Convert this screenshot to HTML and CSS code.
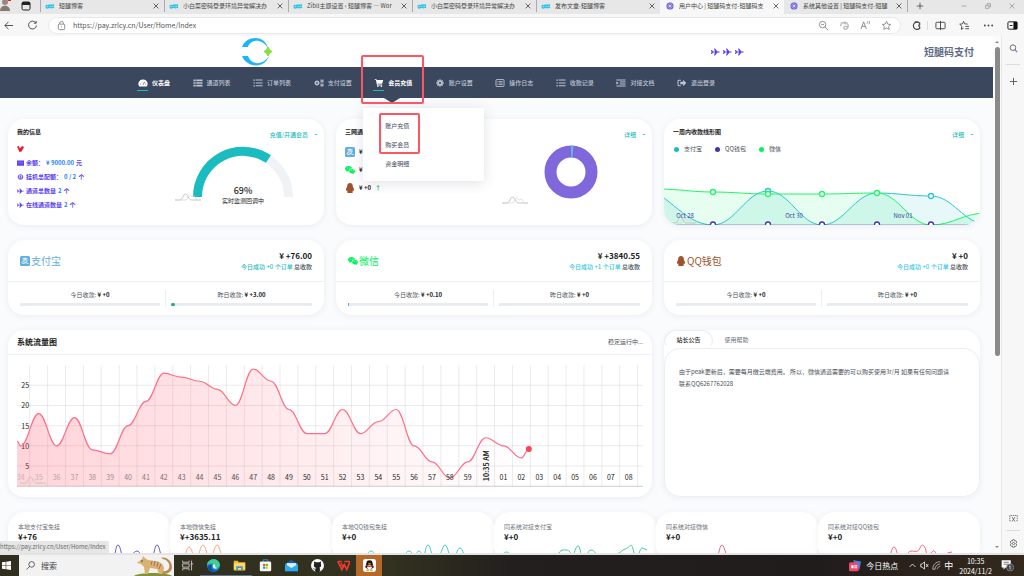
FILE: index.html
```html
<!DOCTYPE html>
<html lang="zh-CN">
<head>
    <meta charset="UTF-8">
    <meta name="viewport" content="width=device-width, initial-scale=1.0">
    <title>用户中心 | 短腿码支付</title>
    <link rel="stylesheet" href="styles.css">
</head>
<body>
    <svg class="sprite" aria-hidden="true">
        <symbol id="i-close" viewBox="0 0 10 10"><path d="M2 2l6 6M8 2l-6 6" fill="none" stroke="currentColor"/></symbol>
        <symbol id="i-blog" viewBox="0 0 20 14"><path d="M1 8c1-4 4-4 6-2l1-3 3 2 2-2 1 3 4-2-1 4 2 2-6 2-4-1-3 1c-3 1-5 0-5-4z" fill="#35c3e6"/><path d="M1 5h8l1-2 2 2 6-2-1 8H3z" fill="#35c3e6"/><path d="M3 8h3M9 7l2 2M13 8h3" stroke="#fff" fill="none"/></symbol>
        <symbol id="i-pay" viewBox="0 0 16 16"><circle cx="8" cy="8" r="7" fill="#5b4bd6"/><circle cx="8" cy="8" r="4.5" fill="none" stroke="#d8d4ff" stroke-width="1.5"/><path d="M6.500 6h3v4h-3z" fill="#fff"/></symbol>
        <symbol id="i-plane" viewBox="0 0 18 16"><path d="M0 4h2l2 3h4L6 1h2l5 6h3c1 0 2 .5 2 1s-1 1-2 1h-3l-5 6H6l2-6H4l-2 3H0l1-4z" fill="currentColor"/></symbol>
        <symbol id="i-alipay" viewBox="0 0 16 16"><rect width="16" height="16" rx="2.500" fill="#63aede"/><path d="M4 4.200h8M8 2.500v4M4.500 6.500h7c-1 4-4 6-7 5.500-2-.6-1.500-3 .5-3 3 0 5 2.500 9 3.500" fill="none" stroke="#fff" stroke-width="1.300"/></symbol>
        <symbol id="i-wechat" viewBox="0 0 20 16"><path d="M7 0c4 0 7 2.500 7 5-4-.5-7 2-6.500 5.500L5 10.300 2.500 12l.6-2.500C1 8.500 0 7 0 5.500 0 2.500 3 0 7 0z" fill="#00f45e"/><path d="M14 6c3.500 0 6 2 6 4.600 0 1.500-1 2.700-2.200 3.500l.4 1.900-2.200-1.200c-4 .8-7.700-1-7.700-4.200C8.300 8 10.800 6 14 6z" fill="#00f45e"/><g fill="#fff"><circle cx="4.700" cy="4" r=".9"/><circle cx="9" cy="4" r=".9"/><circle cx="12.200" cy="9.300" r=".8"/><circle cx="16" cy="9.300" r=".8"/></g></symbol>
        <symbol id="i-qq" viewBox="0 0 16 18"><path d="M8 0c3.500 0 5 2.500 5 5.500 0 1 .3 1.500.8 2.500 1.200 2 2 4.500 1.200 6-.5.300-1.200-.5-1.600-1-.2.800-.5 1.400-1 2 1.500 1 1.200 3-1.400 3H5C2.400 18 2.100 16 3.600 15c-.5-.6-.8-1.200-1-2-.4.500-1.100 1.300-1.600 1-.8-1.500 0-4 1.200-6 .5-1 .8-1.500.8-2.500C3 2.500 4.500 0 8 0z" fill="#a0522d"/></symbol>
        <symbol id="i-wave" viewBox="0 0 26 8"><path d="M0 7h5c3 0 3-6 5.500-6S13 7 17 7h9" fill="none" stroke="#bbb" stroke-width=".8"/><path d="M0 7h10c3 0 3-5 4.500-5s1.500 2 2.500 2 1-1 2-1c2 0 1 4 4 4h3" fill="none" stroke="#d5d5d5" stroke-width=".7"/></symbol>
        <symbol id="i-plus" viewBox="0 0 10 10"><path d="M5 1v8M1 5h8" fill="none" stroke="currentColor"/></symbol>
        <symbol id="i-search" viewBox="0 0 16 16"><circle cx="7" cy="6.500" r="5" fill="none" stroke="currentColor" stroke-width="1.500"/><path d="M10.500 10l4 4.500" stroke="#8a5ad8" stroke-width="2"/></symbol>
        <symbol id="i-rows" viewBox="0 0 16 14"><path d="M0 1h4v3H0zM5 1h11v3H5zM0 5.500h4v3H0zM5 5.500h11v3H5zM0 10h4v3H0zM5 10h11v3H5z" fill="currentColor"/></symbol>
        <symbol id="i-list" viewBox="0 0 16 14"><path d="M0 1h2.500v2H0zM4 1h12v1.800H4zM0 6h2.500v2H0zM4 6h12v1.800H4zM0 11h2.500v2H0zM4 11h12v1.800H4z" fill="currentColor"/></symbol>
        <symbol id="i-gear" viewBox="0 0 16 16"><path d="M8 2.500a5.500 5.500 0 1 0 .01 0zM8 6a2 2 0 1 1-.01 0z" fill="currentColor" fill-rule="evenodd"/><path d="M8 .5v15M.5 8h15M2.700 2.700l10.600 10.600M13.300 2.700L2.700 13.300" stroke="currentColor" stroke-width="2.600" stroke-dasharray="3.200 8.600 3.200"/></symbol>
    </svg>

    <header class="tabs">
        <button class="avatar" aria-label="用户"><svg viewBox="0 0 12 14"><circle cx="5" cy="3" r="3" fill="#998880"/><path d="M0 12c0-7 10-7 10 0z" fill="#887870"/><rect x="8" width="3" height="2" fill="#f11"/></svg></button>
        <button class="tab-menu" aria-label="标签操作"><svg viewBox="0 0 10 10"><rect x="1" y="1" width="8" height="8" rx="1.500" fill="none" stroke="#222"/><path d="M1 1h8v3H1z" fill="#222"/></svg></button>
        <div class="tab"><svg><use href="#i-blog"/></svg><span>短腿博客</span><button aria-label="关闭"><svg><use href="#i-close"/></svg></button></div>
        <div class="tab"><svg><use href="#i-blog"/></svg><span>小白菜密码登录环境异常解决办</span><button aria-label="关闭"><svg><use href="#i-close"/></svg></button></div>
        <div class="tab"><svg><use href="#i-blog"/></svg><span>Zibll主题设置 ‹ 短腿博客 — Wor</span><button aria-label="关闭"><svg><use href="#i-close"/></svg></button></div>
        <div class="tab"><svg><use href="#i-blog"/></svg><span>小白菜密码登录环境异常解决办</span><button aria-label="关闭"><svg><use href="#i-close"/></svg></button></div>
        <div class="tab"><svg><use href="#i-blog"/></svg><span>发布文章-短腿博客</span><button aria-label="关闭"><svg><use href="#i-close"/></svg></button></div>
        <div class="tab active"><svg><use href="#i-pay"/></svg><span>用户中心 | 短腿码支付-短腿码支</span><button aria-label="关闭"><svg><use href="#i-close"/></svg></button></div>
        <div class="tab last"><svg><use href="#i-pay"/></svg><span>系统其他设置 | 短腿码支付-短腿</span><button aria-label="关闭"><svg><use href="#i-close"/></svg></button></div>
        <button class="new-tab" aria-label="新标签"><svg><use href="#i-plus"/></svg></button>
        <div class="window-buttons">
            <button aria-label="最小化"><svg viewBox="0 0 10 10"><path d="M2 5h6" stroke="#999"/></svg></button>
            <button aria-label="还原"><svg viewBox="0 0 10 10"><path d="M2 4h4v4H2zM4 4V2h4v4H6" fill="none" stroke="#999"/></svg></button>
            <button aria-label="关闭窗口"><svg><use href="#i-close"/></svg></button>
        </div>
    </header>

    <div class="toolbar">
        <button aria-label="后退"><svg viewBox="0 0 12 12"><path d="M11 6H2M6 2L2 6l4 4" fill="none" stroke="currentColor"/></svg></button>
        <button aria-label="刷新"><svg viewBox="0 0 12 12"><path d="M9.500 3A4.300 4.300 0 1 0 10.300 6M10 1v2.500H7.500" fill="none" stroke="currentColor"/></svg></button>
        <div class="address">
            <svg viewBox="0 0 12 12"><rect x="2.500" y="4.500" width="7" height="6" rx="1" fill="none" stroke="currentColor"/><path d="M4 4.500V3.500a2 2 0 0 1 4 0v1M6 7v1" fill="none" stroke="currentColor"/></svg>
            <input type="text" aria-label="地址" value="https://pay.zrlcy.cn/User/Home/Index">
            <button aria-label="缩小"><svg viewBox="0 0 12 12"><circle cx="5" cy="5" r="3.500" fill="none" stroke="currentColor"/><path d="M7.500 7.500L11 11M3.500 5h3" stroke="currentColor"/></svg></button>
            <button aria-label="助手"><svg viewBox="0 0 12 12"><path d="M2 7a4 4 0 1 1 6 3c-3 1-4-3-1-3 2 0 3 1 3-1M2 4c2-2 5-1 5 1" fill="none" stroke="#bbb" stroke-width="1.500"/></svg></button>
            <button aria-label="朗读"><svg viewBox="0 0 12 12"><path d="M1 10l3-8 3 8M2.200 7h3.600M7.500 4c1-1 1-1.500.5-2.500M9.500 4.500c1.200-1 1.200-2.500.5-3.500" fill="none" stroke="currentColor"/></svg></button>
            <button aria-label="收藏"><svg viewBox="0 0 12 12"><path d="M6 1.500l1.400 3 3.200.4-2.300 2.200.6 3.200L6 8.800l-2.900 1.500.6-3.200L1.400 4.900l3.200-.4z" fill="none" stroke="currentColor"/></svg></button>
        </div>
        <div class="tools">
            <button aria-label="扩展"><svg viewBox="0 0 12 12"><path d="M9.500 3.500A4 4 0 1 0 9.500 9V7.500a1.300 1.300 0 0 1 0-2.500zM4 2h4" fill="none" stroke="currentColor" stroke-width="1.300"/></svg></button>
            <button class="divided" aria-label="分屏"><svg viewBox="0 0 12 12"><rect x="1" y="2.500" width="10" height="7" rx="1" fill="none" stroke="currentColor"/><path d="M6 1v10" stroke="currentColor"/></svg></button>
            <button aria-label="收藏夹"><svg viewBox="0 0 12 12"><path d="M5 1.500l1.200 2.700 3.300.3M5 1.500L3.800 4.200.8 4.600l2.300 2.200-.6 3.400L5 8.800M7 7h4M7 9.500h4" fill="none" stroke="currentColor"/></svg></button>
            <button aria-label="更多"><svg viewBox="0 0 12 12"><g fill="currentColor"><circle cx="2" cy="6" r="1"/><circle cx="6" cy="6" r="1"/><circle cx="10" cy="6" r="1"/></g></svg></button>
            <button aria-label="侧栏"><svg viewBox="0 0 12 12"><rect x="1" y="2" width="10" height="8" rx="1" fill="none" stroke="#111"/><path d="M7 2h4v8H7z" fill="#111"/><path d="M3 6h3" stroke="#111"/></svg></button>
        </div>
    </div>

    <div class="viewport">
        <main class="page">
            <div class="site-header">
                <svg class="logo" viewBox="0 0 32 28"><path d="M1 9C5-2 23-4 27 10 20-1 9 2 7 9zM1 18c4 11 22 14 27 0-7 10-18 9-21 0z" fill="#1db4fb"/><path d="M27 9q1 3 4 4.500-3 1.500-4 4.500-1-3-4-4.500 3-1.500 4-4.500z" fill="#86e03c" stroke="#86e03c"/></svg>
                <div class="brand">
                    <span class="planes"><svg><use href="#i-plane"/></svg><svg><use href="#i-plane"/></svg><svg><use href="#i-plane"/></svg></span>
                    <b>短腿码支付</b>
                </div>
            </div>

            <nav class="nav">
                <a class="on" href="#"><svg viewBox="0 0 16 14"><path d="M8 1a7.500 7.500 0 0 0-6.500 12h13A7.500 7.500 0 0 0 8 1z" fill="currentColor"/><path d="M8 10l3-5M3 9h1.500M12 9h1.500M5 5l.8.8" stroke="#3b475d" stroke-width="1.300"/></svg><span>仪表盘</span></a>
                <a href="#"><svg><use href="#i-rows"/></svg><span>通道列表</span></a>
                <a href="#"><svg><use href="#i-list"/></svg><span>订单列表</span></a>
                <a href="#"><svg viewBox="0 0 20 16"><use href="#i-gear" y="2" width="12" height="12"/><use href="#i-gear" x="12" width="8" height="8"/><use href="#i-gear" x="12" y="8" width="8" height="8"/></svg><span>支付设置</span></a>
                <div class="nav-open">
                    <a class="on" href="#"><svg viewBox="0 0 16 15"><path d="M0 0h3l.6 2H16l-2 7H5.300l.3 1.500H14V12H4.300L2.200 1.500H0z" fill="currentColor"/><circle cx="6" cy="13.500" r="1.500" fill="currentColor"/><circle cx="12.500" cy="13.500" r="1.500" fill="currentColor"/></svg><span>会员充值</span></a>
                    <div class="mark mark-nav"></div>
                    <div class="menu">
                        <a href="#">账户充值</a>
                        <a href="#">购买会员</a>
                        <a href="#">资金明细</a>
                        <div class="mark mark-menu"></div>
                    </div>
                </div>
                <a href="#"><svg><use href="#i-gear"/></svg><span>账户设置</span></a>
                <a href="#"><svg viewBox="0 0 16 14"><rect x="1" y="1" width="14" height="12" rx="1" fill="none" stroke="currentColor" stroke-width="1.600"/><path d="M3.500 4.500H5M6 4.500h6.500M3.500 7H5M6 7h6.500M3.500 9.500H5M6 9.500h6.500" stroke="currentColor" stroke-width="1.400"/></svg><span>操作日志</span></a>
                <a href="#"><svg><use href="#i-list"/></svg><span>收款记录</span></a>
                <a href="#"><svg viewBox="0 0 16 14"><path d="M0 1h16v1.800H0zM6 4.500h10v1.800H6zM6 8h10v1.800H6zM0 11.500h16v1.800H0zM0 4l4 3-4 3z" fill="currentColor"/></svg><span>对接文档</span></a>
                <a href="#"><svg viewBox="0 0 16 14"><path d="M6 2H3a2 2 0 0 0-2 2v6a2 2 0 0 0 2 2h3" fill="none" stroke="currentColor" stroke-width="1.800"/><path d="M5 5h5V1.500L15.500 7 10 12.500V9H5z" fill="currentColor"/></svg><span>退出登录</span></a>
            </nav>

            <div class="grid">
                <section class="card overview">
                    <div class="card-head"><h3>我的信息</h3><a class="more" href="#">充值/开通会员</a></div>
                    <ul class="info">
                        <li><svg viewBox="0 0 14 12"><path d="M0 1l3-1 3 5 4-5 4 2-5 9-4 1z" fill="#f01428"/></svg></li>
                        <li><svg viewBox="0 0 16 12"><path d="M0 0h16v12H0z" fill="currentColor"/><path d="M2 4h12M2 8h4M8 8h5" stroke="#b6b0ff"/></svg>余额：<em>¥ 9000.00</em> 元</li>
                        <li><svg viewBox="0 0 14 14"><circle cx="7" cy="7" r="5.500" fill="none" stroke="currentColor" stroke-width="2"/><path d="M1 7h12M7 3v8M4 10h6" stroke="currentColor" stroke-width="1.500"/></svg>挂机总配额： <em>0 / 2</em> 个</li>
                        <li><svg><use href="#i-plane"/></svg>通道总数量 <em>2</em> 个</li>
                        <li><svg><use href="#i-plane"/></svg>在线通道数量 <em>2</em> 个</li>
                    </ul>
                    <svg class="gauge" viewBox="0 0 120 58">
                        <path d="M22.500 52a45.500 45.500 0 0 1 91 0" fill="none" stroke="#f0f3f6" stroke-width="9"/>
                        <path d="M22.500 52a45.500 45.500 0 0 1 70.900-37.900" fill="none" stroke="#1bbcc0" stroke-width="9"/>
                        <use href="#i-wave" y="48" width="26" height="8"/>
                        <text class="percent" x="68" y="49">69%</text>
                        <text class="gauge-note" x="68" y="58">实时监测回调中</text>
                    </svg>
                </section>

                <section class="card overview">
                    <div class="card-head"><h3>三网通道收款</h3><a class="more" href="#">详细</a></div>
                    <ul class="channels">
                        <li><svg><use href="#i-alipay"/></svg>¥ +76</li>
                        <li><svg><use href="#i-wechat"/></svg>¥ +3840</li>
                        <li><svg><use href="#i-qq"/></svg>¥ +0 <i>↑</i></li>
                    </ul>
                    <svg class="donut" viewBox="0 0 100 60">
                        <circle cx="69" cy="27" r="20.500" fill="none" stroke="#8067dc" stroke-width="12"/>
                        <path d="M69 .5a26.500 26.500 0 0 1 2.500.1l-1.100 12A14.500 14.500 0 0 0 69 12.500z" fill="#67b7dc"/>
                        <use href="#i-wave" y="51" width="26" height="8"/>
                    </svg>
                </section>

                <section class="card overview week">
                    <div class="card-head"><h3>一周内收款线形图</h3><a class="more" href="#">详细</a></div>
                    <ul class="legend"><li class="c-ali">支付宝</li><li class="c-qq">QQ钱包</li><li class="c-wx">微信</li></ul>
                    <svg id="week" viewBox="0 0 316 41"></svg>
                </section>

                <section class="card pay">
                    <div class="pay-top"><h2 class="ali"><svg><use href="#i-alipay"/></svg>支付宝</h2><div><b>¥ +76.00</b><p><em class="teal">今日成功 +0 个订单</em> 总收款</p></div></div>
                    <div class="pay-bottom">
                        <div><p>今日收款: <b>¥ +0</b></p><div class="bar"><span style="width: 0%"></span></div></div>
                        <div><p>昨日收款: <b>¥ +3.00</b></p><div class="bar"><span class="green" style="width: 3%"></span></div></div>
                    </div>
                </section>
                <section class="card pay">
                    <div class="pay-top"><h2 class="wx"><svg><use href="#i-wechat"/></svg>微信</h2><div><b>¥ +3840.55</b><p><em>今日成功 +1 个订单</em> 总收款</p></div></div>
                    <div class="pay-bottom">
                        <div><p>今日收款: <b>¥ +0.10</b></p><div class="bar"><span style="width: 1%"></span></div></div>
                        <div><p>昨日收款: <b>¥ +0</b></p><div class="bar"><span style="width: 0%"></span></div></div>
                    </div>
                </section>
                <section class="card pay">
                    <div class="pay-top"><h2 class="qq"><svg><use href="#i-qq"/></svg>QQ钱包</h2><div><b>¥ +0</b><p><em>今日成功 +0 个订单</em> 总收款</p></div></div>
                    <div class="pay-bottom">
                        <div><p>今日收款: <b>¥ +0</b></p><div class="bar"><span style="width: 0%"></span></div></div>
                        <div><p>昨日收款: <b>¥ +0</b></p><div class="bar"><span style="width: 0%"></span></div></div>
                    </div>
                </section>

                <section class="card traffic">
                    <div class="traffic-head"><h2>系统流量图</h2><span>稳定运行中...</span></div>
                    <svg id="traffic" viewBox="0 0 625 122"></svg>
                </section>
                <section class="card notice">
                    <div class="notice-tabs"><button class="current">站长公告</button><button>使用帮助</button></div>
                    <div class="notice-body">由于peak更新后，需要每月缴云端费用。 所以，微信通道需要的可以购买使用3r/月 如果有任何问题请联系QQ6267762028</div>
                </section>
            </div>

            <div class="totals">
                <section class="card"><p>本地支付宝免挂</p><b>¥+76</b><svg viewBox="0 0 162 20"><path d="M104 16c4 0 3-14 6-14s3 14 7 14 9-8 12-8 6 8 12 8 5-14 8-14 3 14 7 14" stroke="#6a5cb8"/></svg></section>
                <section class="card"><p>本地微信免挂</p><b>¥+3635.11</b><svg viewBox="0 0 162 20"><path d="M12 16c4 0 4-12 7-12s4 12 7 12 4-14 7-14 4 14 7 14 4-14 7-14 4 14 7 14" stroke="#ffa57c"/></svg></section>
                <section class="card"><p>本地QQ钱包免挂</p><b>¥+0</b><svg viewBox="0 0 162 20"><path d="M30 16c5 0 5-8 9-8s5 8 9 8h22c3 0 3-8 7-8s2 6 5 6 2-6 5-6 2 8 4 8 2-14 5-14 3 14 8 14 6-14 9-14 4 14 7 14 5-11 8-11 4 11 8 11" stroke="#45cbd0"/></svg></section>
                <section class="card"><p>同系统对接支付宝</p><b>¥+0</b><svg viewBox="0 0 162 20"><path d="M8 14c2-6 7-8 10 2M64 12c2-6 6-5 8-5s4 1 6 5c2 3 3-9 6-9s2 13 6 13 3-9 7-9 4 5 10 6M122 11c5-1 6-4 9-5 5-1 6-8 8 0s3 10 6 4 1-6 8-3" stroke="#3dcb9d"/></svg></section>
                <section class="card"><p>同系统对接微信</p><b>¥+0</b><svg viewBox="0 0 162 20"><path d="M57 18c6 0 6-16 9-16s4 16 9 16" stroke="#df6f91"/></svg></section>
                <section class="card"><p>同系统对接QQ钱包</p><b>¥+0</b><svg viewBox="0 0 162 20"><path d="M68 16c5 0 5-12 8-12s3 12 8 12 5-8 9-8 7 2 9-3 5-3 6 3 5 2 7 0 3 5 7 5 7-4 12-4" stroke="#fa637a"/></svg></section>
            </div>
            <div class="status">https://pay.zrlcy.cn/User/Home/Index</div>
        </main>
        <div class="scrollbar"><i class="up"></i><div class="thumb"></div><i class="down"></i></div>
        <aside class="sidebar">
            <button aria-label="搜索"><svg><use href="#i-search"/></svg></button>
            <hr>
            <button aria-label="添加"><svg><use href="#i-plus"/></svg></button>
            <button class="bottom" aria-label="截图"><svg viewBox="0 0 12 12"><path d="M2 9H1V2h10v7h-1" fill="none" stroke="currentColor" stroke-dasharray="2 1"/><path d="M4 4l4 6M8 4l-4 6" stroke="currentColor"/></svg></button>
            <hr class="short">
            <button aria-label="设置"><svg viewBox="0 0 12 12"><path d="M5 1h2l.5 1.600 1.600-.4 1.200 1.800L9.200 6l1.100 2-1.200 1.800-1.600-.4L7 11H5l-.5-1.600-1.600.4L1.700 8l1.100-2-1.100-2 1.200-1.800 1.600.4z" fill="none" stroke="currentColor"/><circle cx="6" cy="6" r="1.500" fill="none" stroke="currentColor"/></svg></button>
        </aside>
    </div>

    <footer class="taskbar">
        <button class="start" aria-label="开始"><svg viewBox="0 0 16 16"><path d="M0 2.300L6.500 1.400v6.200H0zM7.500 1.200L16 0v7.600H7.500zM0 8.500h6.500v6.200L0 13.800zM7.500 8.500H16V16l-8.500-1.200z" fill="#fff"/></svg></button>
        <label class="search">
            <svg viewBox="0 0 16 16"><circle cx="10" cy="6" r="5" fill="none" stroke="#333" stroke-width="1.300"/><path d="M6.500 9.500L1 15" stroke="#333" stroke-width="1.300"/></svg>
            <input type="text" placeholder="搜索" aria-label="搜索">
            <svg class="numbat" viewBox="0 0 40 21"><path d="M0 21c4-4 34-4 38 0z" fill="#83913a"/><path d="M26 16c9 2 12-5 7-10-2-2-5-2-6-3 5-2 11 3 11 9 0 6-7 8-12 7z" fill="#b98a55"/><path d="M4 7l4-3 1-3 2 2 3 2c5 1 10 0 14 4 3 3 2 7 0 10h-3l-2-5-7-1-2 6h-3l-1-7-3-3-4-1z" fill="#d9b173"/><path d="M18 6l-1 4M21 6l-1 5M24 7l-1 5M27 9l-2 5" stroke="#8b6b4a" stroke-width=".8"/><circle cx="8" cy="6" r=".7" fill="#222"/></svg>
        </label>
        <button aria-label="任务视图"><svg viewBox="0 0 16 16"><path d="M2 2v2h8V2M2 14v-2h8v2M2 6h8v4H2zM13 2v12M12 6h3" fill="none" stroke="#ddd"/></svg></button>
        <button class="open" aria-label="Edge"><svg viewBox="0 0 16 16"><circle cx="8" cy="8" r="8" fill="#1786d6"/><path d="M0 8C0-1 14-3 16 7c0 4-5 5-6 3 1-5-7-6-10-2z" fill="#3fcf93"/><path d="M6 8c-2 4 2 8 8 5-4 4-11 3-13-2 0-4 3-4 5-3z" fill="#0c4f9c"/><path d="M7 8c0-2 3-2 3 0s1 3 3 3c-2 2-6 1-6-3z" fill="#e8f5fa"/></svg></button>
        <button class="open" aria-label="资源管理器"><svg viewBox="0 0 16 16"><path d="M1 2h5l1 2h8v10H1z" fill="#f1b632"/><path d="M1 5h14v8H1z" fill="#ffd866"/><path d="M4 14V9h8v5h-2v-3H6v3z" fill="#3f93d9"/></svg></button>
        <button aria-label="商店"><svg viewBox="0 0 16 16"><path d="M5 4V1h6v3" fill="none" stroke="#3aa6e8"/><rect x="1" y="3" width="14" height="12" rx="1.500" fill="#f5f5f5"/><path d="M5 6h2.700v2.700H5z" fill="#f25022"/><path d="M8.300 6H11v2.700H8.300z" fill="#7fba00"/><path d="M5 9.300h2.700V12H5z" fill="#00a4ef"/><path d="M8.300 9.300H11V12H8.300z" fill="#ffb900"/></svg></button>
        <button aria-label="邮件"><svg viewBox="0 0 16 16"><path d="M0 6l8-5 8 5v9H0z" fill="#0f5fae"/><path d="M2 5h12v6H2z" fill="#dceefb"/><path d="M0 6l8 5 8-5v9H0z" fill="#2fa9ec"/></svg></button>
        <button aria-label="GitHub"><svg viewBox="0 0 16 16"><circle cx="8" cy="8" r="8" fill="#fff"/><path d="M5.500 15v-2.500c-2 .5-2.500-1-3.200-1.500M10.500 15v-3c0-.7-.2-1-.6-1.400" fill="none" stroke="#222"/><path d="M4 3l2 1h4l2-1c.5 1 .5 2 0 2.500 1.500 3 0 5.500-4 5.500S2.500 8.500 4 5.500C3.500 5 3.500 4 4 3zM6 10h4.500v6h-5z" fill="#222"/></svg></button>
        <button aria-label="WPS"><svg viewBox="0 0 16 16"><path d="M1 3h5M9 3h7l-4 10-3-6-3 6L1 3M5 5l2 4" fill="none" stroke="#f03a2c" stroke-width="2"/></svg></button>
        <button class="hot" aria-label="QQ"><svg viewBox="0 0 16 16"><rect width="16" height="16" rx="3" fill="#fff"/><path d="M8 1.500c5 0 3 4 5 7.500.8 2-.5 2-1 1.500-1 4-7 4-8 0-.5.500-1.800.5-1-1.500C5 5.500 3 1.500 8 1.500z" fill="#161616"/><ellipse cx="8" cy="10.500" rx="2.800" ry="3" fill="#fff"/><path d="M4 8q4 2 8 0" stroke="#e22" stroke-width="1.500" fill="none"/><path d="M4 14.300h3M9 14.300h3M6.500 6h3" stroke="#f5a300" stroke-width="1.300"/></svg></button>
        <div class="tray">
            <a href="#"><svg viewBox="0 0 16 16"><path d="M5 0l11 2-2 11z" fill="#2b86f0"/><rect y="3" width="13" height="12" rx="2" fill="#f0466a"/><path d="M3 7h3v4H3zM7 7h4v1.500H7zM7 9.500h4V11H7z" fill="#fff"/></svg>今日热点</a>
            <button aria-label="展开"><svg viewBox="0 0 12 12"><path d="M2 8l4-4 4 4" fill="none" stroke="#fff"/></svg></button>
            <button aria-label="静音"><svg viewBox="0 0 12 12"><path d="M1 4h2l3-3v10L3 8H1zM8 4l3 4M11 4L8 8" fill="none" stroke="#fff"/></svg></button>
            <button aria-label="网络"><svg viewBox="0 0 12 12"><path d="M1 11C1 5 5 1 11 1M4 11c0-4 3-7 7-7M7 11c0-2 2-4 4-4M1 11h3" fill="none" stroke="#ccc"/></svg></button>
            <span class="ime">中</span>
            <time>10:35<br>2024/11/2</time>
            <button class="note" aria-label="通知"><svg viewBox="0 0 20 20"><path d="M1 2h14v11H7l-3 3v-3H1z" fill="#fff"/><path d="M4 5h8M4 8h8" stroke="#333"/><circle cx="14" cy="13" r="5.500" fill="#444" stroke="#999"/><path d="M12.500 11.500L14 10.500v5.500" fill="none" stroke="#fff"/></svg></button>
        </div>
    </footer>
    <script src="charts.js"></script>
</body>
</html>
```
FILE: styles.css
```css
* {
    box-sizing: border-box;
}

body {
    margin: 0;
    height: 100vh;
    display: flex;
    flex-direction: column;
    overflow: hidden;
    background: #f7f7f7;
    color: #495057;
    font: 6px/10px "Noto Sans CJK SC", "Noto Sans", sans-serif;
}

h2, h3, p, ul {
    margin: 0;
    padding: 0;
    list-style: none;
}

a {
    color: inherit;
    text-decoration: none;
}

em, i {
    font-style: normal;
}

button, input {
    margin: 0;
    padding: 0;
    border: none;
    background: none;
    color: inherit;
    font: inherit;
}

button {
    display: flex;
    align-items: center;
    justify-content: center;
    cursor: pointer;
}

svg {
    display: block;
    flex: none;
}

.sprite {
    position: absolute;
    width: 0;
    height: 0;
}

/* browser tabs */
.tabs {
    flex: none;
    display: flex;
    height: 14px;
    background: #e7e7e7;
    color: #444;
}

.tabs > *, .window-buttons button {
    height: 12px;
}

.avatar {
    width: 12px;
}

.avatar svg {
    width: 12px;
    height: 14px;
}

.tab-menu {
    width: 28px;
}

.tab-menu svg {
    width: 10px;
    height: 10px;
}

.tab {
    flex: 0 1 124px;
    min-width: 0;
    display: flex;
    align-items: center;
    gap: 4px;
    padding: 0 4px;
    border-left: 1px solid #aaa;
}

.tab > svg {
    width: 10px;
    height: 8px;
}

.tab span {
    flex: 1;
    overflow: hidden;
    white-space: nowrap;
}

.tab button svg, .window-buttons svg, .new-tab svg {
    width: 8px;
    height: 8px;
}

.tab.active {
    height: 14px;
    padding-bottom: 2px;
    border-color: #f7f7f7;
    background: #f7f7f7;
}

.tab.last {
    border-left-color: #e7e7e7;
    border-right: 1px solid #aaa;
}

.new-tab {
    width: 24px;
}

.window-buttons {
    display: flex;
    gap: 16px;
    margin-left: auto;
    padding-right: 8px;
    color: #999;
}

/* address bar */
.toolbar {
    flex: none;
    display: flex;
    align-items: center;
    height: 22px;
    padding: 0 6px 0 3px;
    gap: 13px;
    color: #444;
}

.toolbar svg {
    width: 11px;
    height: 11px;
}

.address {
    flex: 1;
    display: flex;
    align-items: center;
    gap: 10px;
    height: 17px;
    margin-left: -3px;
    padding: 0 8px 0 7px;
    border: 1px solid #e8e8e8;
    border-radius: 9px;
    background: #fff;
    color: #888;
}

.address input {
    flex: 1;
    margin-left: -4px;
    font-size: 7px;
    color: #555;
}

.tools {
    display: flex;
    gap: 13px;
    margin-left: -3px;
}

.divided {
    position: relative;
}

.divided::before {
    content: "";
    position: absolute;
    left: -8px;
    height: 9px;
    border-left: 1px solid #ddd;
}

.viewport {
    flex: 1;
    min-height: 0;
    display: flex;
    border-bottom: 2px solid #e4e4e4;
}

.page {
    position: relative;
    flex: 1;
    min-width: 0;
    overflow: hidden;
    background: #fafbfd;
}

.site-header {
    display: grid;
    grid-template-columns: 24% 1fr 282px;
    align-items: center;
    height: 31px;
    background: #fff;
}

.logo {
    grid-column: 2;
    width: 32px;
    height: 28px;
    margin-left: 3px;
}

.brand {
    display: flex;
    align-items: center;
    justify-content: space-between;
    padding-right: 19px;
    color: #5c6a85;
}

.brand b {
    font-size: 10px;
}

.planes {
    display: flex;
    gap: 3px;
    color: #5a3ff0;
}

.planes svg {
    width: 9px;
    height: 8px;
}

/* main navigation */
.nav {
    display: flex;
    align-items: center;
    justify-content: space-between;
    height: 31px;
    padding: 0 28% 0 138px;
    background: #3b475d;
    color: #bcc4d2;
    font-weight: 500;
    line-height: 11px;
}

.nav > a, .nav-open > a {
    position: relative;
    display: flex;
    align-items: center;
    gap: 4px;
}

.nav > a > svg, .nav-open > a > svg {
    width: 10px;
    height: 8px;
}

.nav .on {
    color: #fff;
    font-weight: 700;
}

.nav .on::after {
    content: "";
    position: absolute;
    left: -1px;
    bottom: -3px;
    width: 11px;
    height: 1px;
    background: #1bbcc0;
}

.nav-open {
    position: relative;
    z-index: 2;
}

.nav-open::after {
    content: "";
    position: absolute;
    left: 10px;
    top: 21px;
    border: 8px solid transparent;
    border-top: 5px solid #3b475d;
    border-bottom: none;
}

.menu {
    position: absolute;
    left: -11px;
    top: 31px;
    width: 121px;
    padding: 8px 22px;
    background: #fff;
    box-shadow: 0 2px 12px rgba(60, 70, 95, .16);
    color: #3b475d;
    font-weight: 400;
}

.menu a {
    display: block;
    line-height: 19px;
}

.mark {
    position: absolute;
    border: 2px solid #fb5663;
    border-radius: 2px;
}

.mark-nav {
    left: -13px;
    top: -22px;
    width: 63px;
    height: 49px;
    z-index: 1;
}

.mark-menu {
    left: 16px;
    top: 5px;
    width: 41px;
    height: 41px;
}

/* dashboard */
.grid {
    display: grid;
    grid-template-columns: repeat(3, 1fr);
    gap: 15px 12px;
    padding: 21px 13px 15px 8px;
}

.card {
    min-width: 0;
    border-radius: 16px;
    background: #fff;
    box-shadow: 0 1px 6px rgba(60, 70, 95, .08);
}

.overview {
    display: grid;
    grid-template-columns: 1fr auto;
    grid-template-rows: 19px 1fr;
    height: 106px;
    overflow: hidden;
}

.card-head {
    grid-column: 1 / 3;
    display: flex;
    justify-content: space-between;
    padding: 8px 6px 0 9px;
}

h3 {
    color: #222;
    font-size: 6px;
}

.more {
    display: flex;
    align-items: center;
    gap: 6px;
    padding-top: 4px;
    color: #1bbcc0;
    font-weight: 500;
}

.more::after {
    content: "";
    border: 2px solid transparent;
    border-top: 1px solid #1bbcc0;
    border-bottom: none;
}

.info {
    padding: 4px 9px;
    color: #5a3ff0;
    font-weight: 700;
    line-height: 14px;
}

.info em {
    color: #2684ff;
}

.info li {
    display: flex;
    align-items: center;
    height: 14px;
    gap: 2px;
}

.info svg {
    width: 7px;
    height: 6px;
}

.gauge {
    width: 120px;
    height: 58px;
    margin: 7px 29px 0 0;
    overflow: visible;
}

.percent {
    fill: #222;
    font-size: 9px;
    font-weight: 500;
    text-anchor: middle;
}

.gauge-note {
    fill: #222;
    font-size: 6px;
    text-anchor: middle;
}

.channels {
    padding: 5px 9px;
    color: #222;
    font-weight: 700;
}

.channels li {
    display: flex;
    align-items: center;
    gap: 4px;
    height: 18px;
}

.channels svg {
    width: 10px;
    height: 10px;
}

.channels i {
    color: #27b883;
}

.donut {
    width: 100px;
    height: 60px;
    margin: 7px 50px 0 0;
}

.week {
    grid-template-columns: 1fr;
    grid-template-rows: 19px 1fr auto;
}

.week .card-head {
    grid-column: 1;
}

.week > svg {
    width: 100%;
}

.legend {
    display: flex;
    gap: 13px;
    padding: 6px 10px;
}

.legend li {
    display: flex;
    align-items: center;
    gap: 5px;
    height: 10px;
}

.legend li::before {
    content: "";
    width: 5px;
    height: 5px;
    border-radius: 50%;
    background: #1bbcc0;
}

.legend .c-qq::before {
    background: #4a35a0;
}

.legend .c-wx::before {
    background: #00f45e;
}

.axis {
    fill: #41419c;
    font-size: 6px;
    text-anchor: middle;
}

.pay-top {
    display: flex;
    align-items: center;
    justify-content: space-between;
    height: 42px;
    padding: 0 12px;
    border-bottom: 1px solid #eceef1;
    text-align: right;
}

.pay-top h2 {
    display: flex;
    align-items: center;
    gap: 1px;
    font-size: 10px;
    font-weight: 400;
}

.pay-top h2 svg {
    width: 10px;
    height: 10px;
}

.ali {
    color: #63aede;
}

.wx {
    color: #00f45e;
}

.qq {
    color: #a0522d;
}

.pay b {
    color: #222;
}

.pay-top b {
    font-size: 8px;
    line-height: 12px;
}

.pay-top p {
    font-weight: 500;
}

.pay-top em {
    color: #2cc8e4;
}

.pay-top .teal {
    color: #1bbcc0;
}

.pay-bottom {
    display: grid;
    grid-template-columns: 1fr 1fr;
    height: 33px;
    padding: 8px 12px;
    text-align: center;
}

.pay-bottom > div:first-child {
    padding-right: 5px;
    border-right: 1px solid #eceef1;
}

.pay-bottom > div:last-child {
    padding-left: 5px;
}

.bar {
    height: 3px;
    margin-top: 3px;
    background: #e9ecef;
}

.bar span {
    display: block;
    height: 3px;
    background: #58a6f5;
}

.bar .green {
    border-radius: 2px;
    background: #16b17b;
}

.traffic {
    grid-column: span 2;
}

.traffic-head {
    display: flex;
    align-items: center;
    justify-content: space-between;
    height: 25px;
    padding: 0 9px;
    border-bottom: 1px solid #f0f1f4;
}

.traffic h2 {
    color: #222;
    font-size: 8px;
}

.traffic > svg {
    width: 100%;
    padding: 10px 9px;
    overflow: visible;
}

.traffic text {
    fill: #222;
    font-size: 7px;
}

.notice {
    display: flex;
    flex-direction: column;
}

.notice-tabs {
    display: flex;
    color: #6a7178;
}

.notice-tabs button {
    width: 47px;
    height: 18px;
    padding-top: 1px;
}

.notice-tabs .current {
    width: 49px;
    border: 1px solid #eceef1;
    border-bottom-color: #fff;
    border-radius: 14px 14px 9px 9px;
    color: #222;
    font-weight: 500;
}

.notice-body {
    flex: 1;
    padding: 17px 26px 17px 14px;
    border: 1px solid #eceef1;
    border-radius: 16px;
    line-height: 12px;
}

.totals {
    display: grid;
    grid-template-columns: repeat(6, 1fr);
    padding: 0 13px 0 8px;
}

.totals p, .totals b {
    display: block;
    padding-left: 10px;
}

.totals p {
    padding-top: 10px;
    color: #6a7178;
}

.totals b {
    color: #222;
    font-size: 8px;
}

.totals svg {
    width: 100%;
    margin-top: 1px;
}

.totals path {
    fill: none;
}

.status {
    position: absolute;
    left: 0;
    bottom: 0;
    width: 109px;
    height: 12px;
    border-radius: 0 2px 0 0;
    background: #e6e6e6;
    color: #666;
    line-height: 12px;
}

/* scrollbar and edge sidebar */
.scrollbar {
    display: flex;
    flex-direction: column;
    align-items: center;
    gap: 4px;
    width: 8px;
    padding: 5px 0;
    background: #fbfbfb;
}

.scrollbar i {
    border: 2px solid transparent;
}

.scrollbar .up {
    border-top: none;
    border-bottom-color: #888;
}

.scrollbar .down {
    margin-top: auto;
    border-bottom: none;
    border-top-color: #888;
}

.thumb {
    width: 5px;
    height: 61%;
    border-radius: 3px;
    background: #8a8a8a;
}

.sidebar {
    display: flex;
    flex-direction: column;
    align-items: center;
    width: 23px;
    padding: 6px 0 4px;
    border-left: 1px solid #e6e6e6;
    color: #555;
}

.sidebar button {
    width: 12px;
    height: 12px;
}

.sidebar svg {
    width: 9px;
    height: 9px;
}

.sidebar hr {
    width: 14px;
    margin: 10px 0;
    border: none;
    border-top: 1px solid #ddd;
}

.sidebar .short {
    margin: 6px 0;
}

.sidebar .bottom {
    margin-top: auto;
}

/* taskbar */
.taskbar {
    flex: none;
    display: flex;
    height: 21px;
    background: linear-gradient(90deg, #302e1f 0%, #33311f 38%, #231f1e 50%, #211c1c 80%, #33291d 100%);
    color: #fff;
}

.start {
    width: 19px;
    padding-right: 6px;
}

.start svg {
    width: 9px;
    height: 9px;
}

.search {
    display: flex;
    align-items: center;
    width: 155px;
    padding-left: 7px;
    gap: 6px;
    background: #f2f2f2;
    color: #333;
    font-size: 8px;
}

.search > svg {
    width: 9px;
    height: 9px;
}

.search input {
    flex: 1;
    min-width: 0;
}

.search input::placeholder {
    color: #444;
}

.search .numbat {
    width: 40px;
    height: 21px;
}

.taskbar > button:not(.start) {
    width: 26px;
}

.taskbar > button:not(.start) svg {
    width: 13px;
    height: 13px;
}

.taskbar .open {
    border-bottom: 1px solid #5d738c;
}

.taskbar .hot {
    background: #b2692a;
}

.tray {
    display: flex;
    align-items: center;
    gap: 3px;
    margin-left: auto;
    padding-right: 10px;
}

.tray a {
    display: flex;
    align-items: center;
    gap: 5px;
    margin-right: 7px;
    font-size: 8px;
}

.tray a svg {
    width: 12px;
    height: 12px;
}

.tray button svg {
    width: 9px;
    height: 9px;
}

.ime {
    font-size: 9px;
}

.tray time {
    margin: 0 6px 0 3px;
    font-size: 7px;
    text-align: center;
}

.tray .note svg {
    width: 13px;
    height: 13px;
}
```
FILE: charts.js
```js
// every point is a flat spot, so the curve eases from one to the next
function curve(points) {
    let d = 'M' + points[0].join(' ');
    for (let i = 1; i < points.length; i++) {
        const [x0, y0] = points[i - 1];
        const [x1, y1] = points[i];
        const k = (x1 - x0) * 0.4;
        d += `C${x0 + k} ${y0} ${x1 - k} ${y1} ${x1} ${y1}`;
    }
    return d;
}

function drawTraffic() {
    const values = [10, 18, 10, 17, 9, 8, 15, 21, 28, 27, 26, 24, 20, 29, 26, 19, 13, 13,
        19, 13, 16, 19, 10, 6, 2, 6, 12, 10, 7];
    const step = 17.85;
    const y = v => 121 - v * 4.03;
    const points = values.map((v, i) => [3.8 + i * step, y(v)]);
    points.unshift([0, y(11.2)]);
    points.push([511, y(9.2)]);
    const line = curve(points);

    let out = '<defs><linearGradient id="fade"><stop stop-color="#fe4a62" stop-opacity=".24"/>' +
        '<stop offset="1" stop-color="#fe4a62" stop-opacity="0"/></linearGradient></defs>';
    for (let i = 0; i < 35; i++) {
        out += `<path d="M${12.7 + i * step} 0V121" stroke="#000" stroke-opacity=".08"/>`;
    }
    for (let v = 0; v <= 25; v += 5) {
        out += `<path d="M0 ${y(v)}H625" stroke="#000" stroke-opacity="${v ? 0.08 : 0.2}"/>`;
        if (v) out += `<text x="12" y="${y(v) + 3}" text-anchor="end">${v}</text>`;
    }
    out += `<path d="${line}V121H0z" fill="url(#fade)"/>`;
    out += `<path d="${line}" fill="none" stroke="#fe7087" stroke-width="1.2"/>`;
    out += `<circle cx="511" cy="${y(9.2)}" r="3" fill="#fe4257"/>`;
    for (let i = 0; i < 35; i++) {
        const x = 3.8 + i * step;
        if (i === 26) {
            out += `<text transform="translate(${x + 3} 116) rotate(-90)" font-weight="700">10:35 AM</text>`;
            continue;
        }
        const label = String((34 + i) % 60).padStart(2, '0');
        out += `<text x="${x}" y="115" text-anchor="middle" opacity="${Math.min(1, 0.2 + i * 0.05)}">${label}</text>`;
    }
    out += '<use href="#i-wave" x="3" y="111" width="26" height="8"/>';
    document.getElementById('traffic').innerHTML = out;
}

function drawWeek() {
    const xs = [49, 104, 158, 213, 267];
    const green = [[-6, 5], [49, 8], [104, 10], [158, 10], [213, 9], [267, 41], [322, 29]];
    const teal = [[-30, 2], [49, 41], [104, 7], [158, 41], [213, 9], [267, 12], [322, 40]];
    let out = `<path d="${curve(green)}V41H-6z" fill="#00f45e" fill-opacity=".1"/>` +
        `<path d="${curve(teal)}V41H-30z" fill="#1bbcc0" fill-opacity=".11"/>` +
        `<path d="${curve(teal)}" fill="none" stroke="#2fc4c7"/>` +
        `<path d="${curve(green)}" fill="none" stroke="#1cf765"/>` +
        '<path d="M0 41H316" stroke="#4a35a0" stroke-opacity=".5"/>' +
        '<use href="#i-wave" x="6" y="32" width="26" height="8"/>';
    const dot = (x, y, c) => `<circle cx="${x}" cy="${y}" r="2.5" fill="#fff" stroke="${c}" stroke-width="1.3"/>`;
    xs.forEach(x => out += dot(x, 40.5, '#4a35a0'));
    out += dot(104, 7, '#2fc4c7') + dot(267, 12, '#2fc4c7');
    green.slice(1, 5).forEach(p => out += dot(p[0], p[1], '#1cf765'));
    ['Oct 28', 'Oct 30', 'Nov 01'].forEach((t, i) => {
        out += `<text class="axis" x="${21 + i * 109}" y="34">${t}</text>`;
    });
    document.getElementById('week').innerHTML = out;
}

drawTraffic();
drawWeek();
```
